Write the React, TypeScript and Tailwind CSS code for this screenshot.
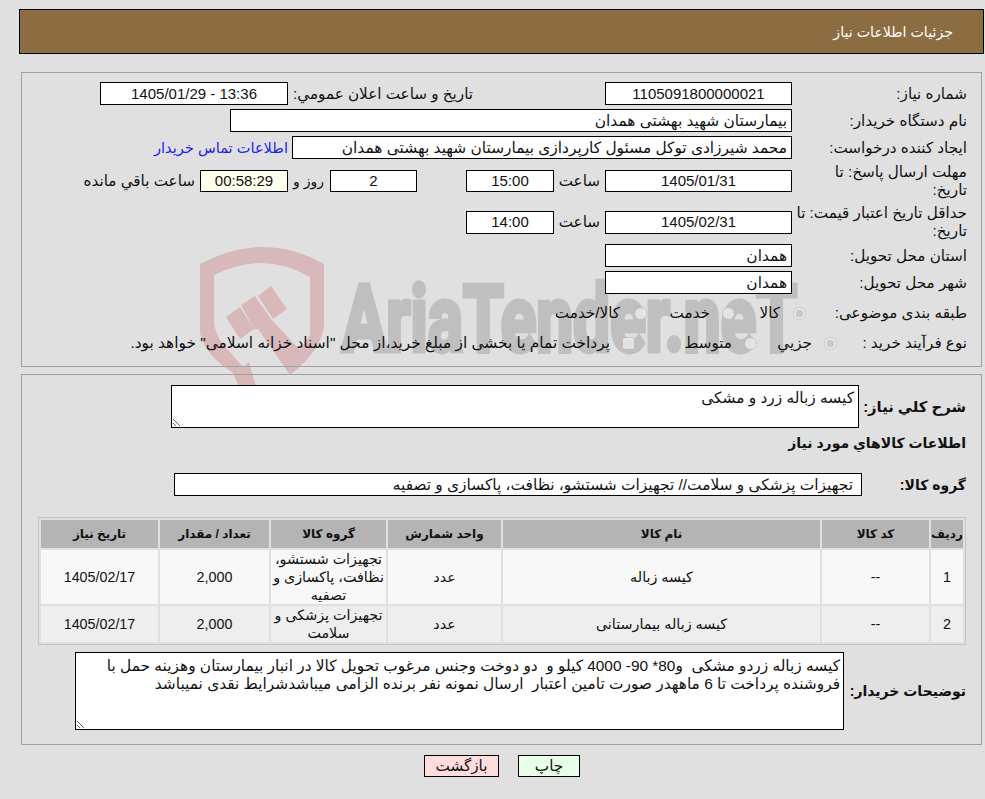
import type { ReactNode } from "react";

function Box({ w, children, center, bg = "bg-white" }: { w: string; children?: ReactNode; center?: boolean; bg?: string }) {
  return (
    <div className={`${w} ${bg} h-full shrink-0 border border-black flex items-center ${center ? "justify-center text-[15px]" : "pr-[4px] text-[15.4px]"}`}>
      <span>{children}</span>
    </div>
  );
}

function Watermark() {
  return (
    <svg className="absolute left-0 top-0 z-0 [direction:ltr]" width="985" height="400" viewBox="0 0 985 400">
      <path
        fill="#d8b8b8"
        d="M200 264 Q232 247 262 247 Q295 247 324 264 L324 325 Q322 350 290 375 L258 329 L271 319 L300 350 L310 335 L310 277 Q285 263 262 263 Q238 263 214 275 L214 323 Q216 335 222 343 L243 367 L249 362 L257 390 L238 385 L233 373 Q205 355 200 333 Z"
      />
      <path fill="#d8b8b8" d="M226 317 L240 307 L254 329 L240 339 Z" />
      <path fill="#d8b8b8" d="M241 305 L255 296 L271 319 L258 329 L254 329 Z" />
      <path fill="#d8b8b8" d="M258 296 L271 286 L287 309 L273 319 Z" />
      <text
        x="342"
        y="351"
        fill="#bfbfbf"
        stroke="#bfbfbf"
        strokeWidth="5"
        fontFamily="Roboto, sans-serif"
        fontWeight="700"
        fontSize="93"
        textLength="455"
        lengthAdjust="spacingAndGlyphs"
      >
        AriaTender.neT
      </text>
    </svg>
  );
}

const items = [
  { no: "1", code: "--", name: "کیسه زباله", unit: "عدد", group: "تجهیزات شستشو، نظافت، پاکسازی و تصفیه", qty: "2,000", date: "1405/02/17", bg: "bg-[#f8f8f8]", h: "h-[54px]" },
  { no: "2", code: "--", name: "کیسه زباله بیمارستانی", unit: "عدد", group: "تجهیزات پزشکی و سلامت", qty: "2,000", date: "1405/02/17", bg: "bg-[#eeeeee]", h: "h-[36px]" },
];

const headers = ["ردیف", "کد کالا", "نام کالا", "واحد شمارش", "گروه کالا", "تعداد / مقدار", "تاریخ نیاز"];

export default function App() {
  return (
    <div
      dir="rtl"
      className="relative h-[799px] w-[985px] overflow-hidden bg-[#e0e0e0] text-[15.2px] leading-[18px] text-[#111] font-['Liberation_Sans','DejaVu_Sans',sans-serif]"
    >
      <Watermark />
      <div className="relative z-10">
        <div className="h-[9px]" />
        <div className="mr-[1px] flex h-[45px] w-[965px] items-center border border-black bg-[#8c6d42] pr-[30px] text-[14.2px] text-white">
          جزئیات اطلاعات نیاز
        </div>

        <div className="mr-[3px] mt-[18px] h-[295px] w-[961px] border border-[#a0a0a0] pr-[14px] pt-[9px]">
          <div className="flex h-[23px] items-center">
            <div className="w-[175px] shrink-0">شماره نیاز:</div>
            <Box w="w-[187px]" center>1105091800000021</Box>
            <div className="mr-[132px] w-[185px] shrink-0 whitespace-nowrap">تاریخ و ساعت اعلان عمومي:</div>
            <Box w="w-[188px]" center>13:36 - 1405/01/29</Box>
          </div>
          <div className="mt-[4px] flex h-[23px] items-center">
            <div className="w-[175px] shrink-0">نام دستگاه خریدار:</div>
            <Box w="w-[562px]">بیمارستان شهید بهشتی همدان</Box>
          </div>
          <div className="mt-[4px] flex h-[23px] items-center">
            <div className="w-[175px] shrink-0">ایجاد کننده درخواست:</div>
            <Box w="w-[500px]">محمد شیرزادی توکل مسئول کارپردازی بیمارستان شهید بهشتی همدان</Box>
            <a className="mr-[4px] text-[14.6px] text-[#2222ee]">اطلاعات تماس خریدار</a>
          </div>
          <div className="mt-[4px] flex h-[36px] items-center">
            <div className="w-[175px] shrink-0">مهلت ارسال پاسخ: تا<br />تاریخ:</div>
            <div className="h-[22px]"><Box w="w-[187px]" center>1405/01/31</Box></div>
            <div className="w-[51px] shrink-0 pr-[5px]">ساعت</div>
            <div className="h-[22px]"><Box w="w-[88px]" center>15:00</Box></div>
            <div className="mr-[49px] h-[22px]"><Box w="w-[87px]" center>2</Box></div>
            <div className="w-[42px] shrink-0 pr-[6px] text-[14px]">روز و</div>
            <div className="h-[22px]"><Box w="w-[88px]" center bg="bg-[#ffffee]">00:58:29</Box></div>
            <div className="pr-[5px]">ساعت باقي مانده</div>
          </div>
          <div className="mt-[5px] flex h-[36px] items-center">
            <div className="w-[175px] shrink-0">حداقل تاریخ اعتبار قیمت: تا<br />تاریخ:</div>
            <div className="h-[23px]"><Box w="w-[187px]" center>1405/02/31</Box></div>
            <div className="w-[51px] shrink-0 pr-[5px]">ساعت</div>
            <div className="h-[23px]"><Box w="w-[88px]" center>14:00</Box></div>
          </div>
          <div className="mt-[4px] flex h-[23px] items-center">
            <div className="w-[175px] shrink-0">استان محل تحویل:</div>
            <Box w="w-[187px]">همدان</Box>
          </div>
          <div className="mt-[4px] flex h-[23px] items-center">
            <div className="w-[175px] shrink-0">شهر محل تحویل:</div>
            <Box w="w-[187px]">همدان</Box>
          </div>
          <div className="mt-[4px] flex h-[30px] items-center">
            <div className="w-[161px] shrink-0">طبقه بندی موضوعی:</div>
            <label className="flex w-[71px] shrink-0 items-center"><input type="radio" name="a" disabled defaultChecked className="m-0" /><span className="mr-[13px]">کالا</span></label>
            <label className="flex w-[88px] shrink-0 items-center"><input type="radio" name="a" disabled className="m-0" /><span className="mr-[12px]">خدمت</span></label>
            <label className="flex items-center"><input type="radio" name="a" disabled className="m-0" /><span className="mr-[14px]">کالا/خدمت</span></label>
          </div>
          <div className="flex h-[30px] items-center">
            <div className="w-[130px] shrink-0">نوع فرآیند خرید :</div>
            <label className="flex w-[80px] shrink-0 items-center"><input type="radio" name="b" disabled defaultChecked className="m-0" /><span className="mr-[12px]">جزيي</span></label>
            <label className="flex w-[122px] shrink-0 items-center"><input type="radio" name="b" disabled className="m-0" /><span className="mr-[12px]">متوسط</span></label>
            <label className="flex items-center"><input type="checkbox" disabled className="m-0" /><span className="mr-[12px] text-[15.4px]">پرداخت تمام یا بخشی از مبلغ خرید،از محل "اسناد خزانه اسلامی" خواهد بود.</span></label>
          </div>
        </div>

        <div className="mr-[3px] mt-[7px] h-[371px] w-[961px] border border-[#a0a0a0] pr-[15px] pt-[10px]">
          <div className="flex h-[43px] items-center">
            <div className="w-[107px] shrink-0 text-[14.8px] font-bold">شرح كلي نياز:</div>
            <textarea readOnly defaultValue="کیسه زباله زرد و مشکی" className="h-[43px] w-[688px] resize border border-black bg-white px-[4px] py-[3px] text-[15.4px] outline-none" />
          </div>
          <div className="mt-[5px] flex h-[20px] items-center text-[14px] font-bold">اطلاعات كالاهاي مورد نياز</div>
          <div className="mt-[20px] flex h-[23px] items-center">
            <div className="w-[104px] shrink-0 text-[14px] font-bold">گروه كالا:</div>
            <div className="h-[23px] w-[688px] border border-black bg-white pr-[8px] text-[15.4px] leading-[21px]">تجهیزات پزشکی و سلامت// تجهیزات شستشو، نظافت، پاکسازی و تصفیه</div>
          </div>
          <table className="mt-[21px] w-[928px] table-fixed border-separate border-spacing-[2px] border border-[#c4c4c4] text-center">
            <colgroup>
              <col className="w-[32px]" />
              <col className="w-[107px]" />
              <col className="w-[317px]" />
              <col className="w-[113px]" />
              <col className="w-[115px]" />
              <col className="w-[109px]" />
              <col className="w-[117px]" />
            </colgroup>
            <thead>
              <tr>
                {headers.map(h => <th key={h} className="h-[28px] whitespace-nowrap bg-[#b4b4b4] p-0 text-[12px] font-bold">{h}</th>)}
              </tr>
            </thead>
            <tbody>
              {items.map(it => (
                <tr key={it.no} className={it.h}>
                  {[it.no, it.code, it.name, it.unit, it.group, it.qty, it.date].map((v, i) => (
                    <td key={i} className={`${it.bg} p-0 text-[14.3px] ${i === 4 ? "px-[2px]" : ""}`}>{v}</td>
                  ))}
                </tr>
              ))}
            </tbody>
          </table>
          <div className="mt-[7px] flex h-[78px] items-center">
            <div className="w-[122px] shrink-0 whitespace-nowrap text-[14px] font-bold">توضیحات خریدار:</div>
            <textarea
              readOnly
              defaultValue="کیسه زباله زردو مشکی  و80* 90- 4000 کیلو و  دو دوخت وجنس مرغوب تحویل کالا در انبار بیمارستان وهزینه حمل با فروشنده پرداخت تا 6 ماههدر صورت تامین اعتبار  ارسال نمونه نفر برنده الزامی میباشدشرایط نقدی نمیباشد"
              className="h-[78px] w-[769px] resize border border-black bg-white px-[3px] py-[4px] text-[15.4px] outline-none"
            />
          </div>
        </div>

        <div className="mr-[405px] mt-[10px] flex h-[22px] gap-[19px]">
          <button className="h-full w-[62px] border border-black bg-[#e8ffe8]">چاپ</button>
          <button className="h-full w-[75px] border border-black bg-[#ffdddd]">بازگشت</button>
        </div>
      </div>
    </div>
  );
}
